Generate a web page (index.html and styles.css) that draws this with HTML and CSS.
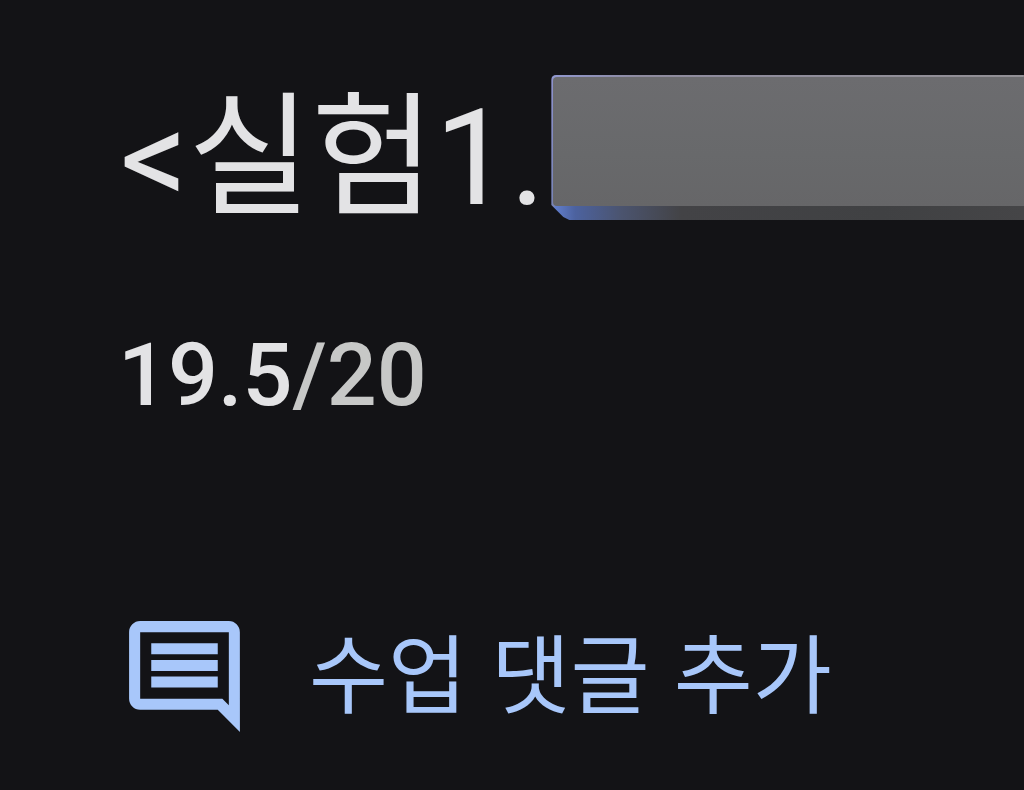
FILE: index.html
```html
<!DOCTYPE html>
<html lang="ko">
<head>
<meta charset="utf-8">
<meta name="viewport" content="width=device-width, initial-scale=1">
<title>실험1</title>
<link rel="stylesheet" href="styles.css">
</head>
<body>
<main class="page">
  <header class="heading">
    <h1 class="title">&lt;실험1.</h1>
    <div class="cover"><div class="cover-face"></div></div>
  </header>
  <p class="score">19.5<span class="score-total">/20</span></p>
  <button class="comment" type="button">
    <svg class="comment-icon" viewBox="0 0 24 24" aria-hidden="true">
      <path fill="currentColor" d="M21.99 4c0-1.1-.89-2-1.99-2H4c-1.1 0-2 .9-2 2v12c0 1.1.9 2 2 2h14l4 4-.01-18zM20 4v13.17L18.83 16H4V4h16zM6 12h12v2H6zm0-3h12v2H6zm0-3h12v2H6z"/>
    </svg>
    <span class="comment-label">수업 댓글 추가</span>
  </button>
</main>
</body>
</html>
```
FILE: styles.css
```css
body {
  margin: 0;
  background: #131316;
  color: #e3e3e5;
  font-family: Roboto, "Noto Sans CJK KR", sans-serif;
}

.page {
  display: flex;
  flex-direction: column;
  padding: 75px 0 40px 118px;
}

.heading {
  display: flex;
  gap: 6px;
}

.title {
  margin: 0;
  padding-left: 2px;
  font-size: 134px;
  font-weight: 400;
  line-height: 168px;
  white-space: nowrap;
}

.cover {
  flex: 1;
  height: 145px;
  box-sizing: border-box;
  padding: 2px 0 14px 2px;
  border-radius: 5px 0 0 0;
  background:
    linear-gradient(90deg, #9198d0, #8e8b9f 90px, #929095) top / 100% 3px no-repeat,
    linear-gradient(#8f93cd, #7884b6) left top / 4px 132px no-repeat,
    linear-gradient(90deg, #6684d6, #4c629f 24px, #4b546f 70px, #434346 130px, #404143 70%, #454547);
  clip-path: polygon(0 0, 100% 0, 100% 100%, 18px 100%, 12px 142px, 0 130px);
}

.cover-face {
  height: 100%;
  border-radius: 4px 0 0 4px;
  background: linear-gradient(#6c6c6f, #68696b 60%, #666668);
}

.score {
  margin: 72px 0 0;
  font-size: 88px;
  font-weight: 500;
  line-height: 120px;
}

.score-total {
  color: #c7c8c7;
}

.comment {
  display: flex;
  align-items: flex-start;
  align-self: flex-start;
  gap: 58px;
  margin: 175px 0 0;
  padding: 0;
  border: 0;
  background: none;
  color: #a8c7fa;
  font: 400 86px/120px "Noto Sans CJK KR", sans-serif;
  white-space: nowrap;
  cursor: pointer;
}

.comment-icon {
  flex: none;
  width: 133px;
  height: 133px;
}
```
